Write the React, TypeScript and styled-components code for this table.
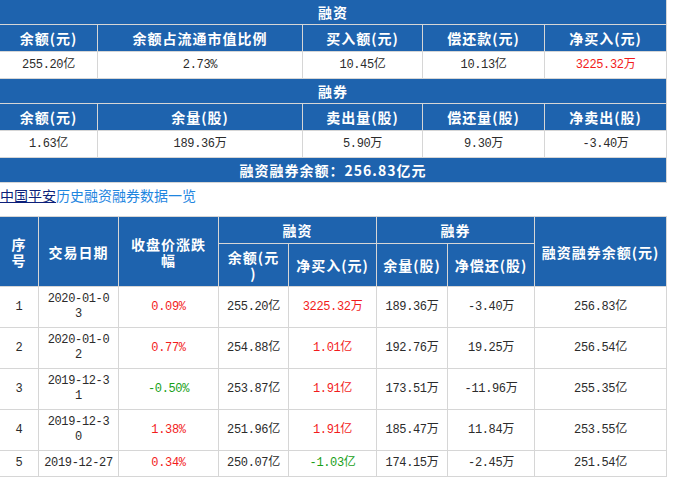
import React from 'react';
import styled, { createGlobalStyle } from 'styled-components';

type Tone = 'up' | 'down' | undefined;

interface Cell {
  text: string,
  tone?: Tone,
}

const GlobalStyle = createGlobalStyle`
  html, body {
    margin: 0;
    padding: 0;
    background: #fff;
  }
  body {
    font-family: "Noto Sans CJK SC", "Liberation Sans", sans-serif;
    width: 673px;
    overflow: hidden;
  }
`

const financing: Cell[] = [
  { text: '255.20亿' },
  { text: '2.73%' },
  { text: '10.45亿' },
  { text: '10.13亿' },
  { text: '3225.32万', tone: 'up' },
]

const lending: Cell[] = [
  { text: '1.63亿' },
  { text: '189.36万' },
  { text: '5.90万' },
  { text: '9.30万' },
  { text: '-3.40万' },
]

const history: Array<Cell[]> = [
  [{ text: '1' }, { text: '2020-01-0\n3' }, { text: '0.09%', tone: 'up' }, { text: '255.20亿' }, { text: '3225.32万', tone: 'up' }, { text: '189.36万' }, { text: '-3.40万' }, { text: '256.83亿' }],
  [{ text: '2' }, { text: '2020-01-0\n2' }, { text: '0.77%', tone: 'up' }, { text: '254.88亿' }, { text: '1.01亿', tone: 'up' }, { text: '192.76万' }, { text: '19.25万' }, { text: '256.54亿' }],
  [{ text: '3' }, { text: '2019-12-3\n1' }, { text: '-0.50%', tone: 'down' }, { text: '253.87亿' }, { text: '1.91亿', tone: 'up' }, { text: '173.51万' }, { text: '-11.96万' }, { text: '255.35亿' }],
  [{ text: '4' }, { text: '2019-12-3\n0' }, { text: '1.38%', tone: 'up' }, { text: '251.96亿' }, { text: '1.91亿', tone: 'up' }, { text: '185.47万' }, { text: '11.84万' }, { text: '253.55亿' }],
  [{ text: '5' }, { text: '2019-12-27' }, { text: '0.34%', tone: 'up' }, { text: '250.07亿' }, { text: '-1.03亿', tone: 'down' }, { text: '174.15万' }, { text: '-2.45万' }, { text: '251.54亿' }],
]

const App: React.FC = () => {
  return (
    <Page>
      <GlobalStyle />
      <SummaryTable>
        <colgroup>
          {[98, 205, 120, 122, 122].map((w, i) => <col key={i} style={{ width: w }} />)}
        </colgroup>
        <tbody>
          <BandRow><Band colSpan={5}>融资</Band></BandRow>
          <Row>
            <Head>余额(元)</Head>
            <Head>余额占流通市值比例</Head>
            <Head>买入额(元)</Head>
            <Head>偿还款(元)</Head>
            <Head>净买入(元)</Head>
          </Row>
          <Row>
            {financing.map((c, i) => <Data key={i} $tone={c.tone}>{c.text}</Data>)}
          </Row>
          <BandRow><Band colSpan={5}>融券</Band></BandRow>
          <Row>
            <Head>余额(元)</Head>
            <Head>余量(股)</Head>
            <Head>卖出量(股)</Head>
            <Head>偿还量(股)</Head>
            <Head>净卖出(股)</Head>
          </Row>
          <Row>
            {lending.map((c, i) => <Data key={i} $tone={c.tone}>{c.text}</Data>)}
          </Row>
          <BandRow><Band colSpan={5}>融资融券余额：256.83亿元</Band></BandRow>
        </tbody>
      </SummaryTable>

      <LinkLine>
        <StockLink href="#">中国平安</StockLink>
        <HistoryLink href="#">历史融资融券数据一览</HistoryLink>
      </LinkLine>

      <HistoryTable>
        <colgroup>
          {[39, 80, 100, 70, 88, 71, 87, 132].map((w, i) => <col key={i} style={{ width: w }} />)}
        </colgroup>
        <thead>
          <GroupRow>
            <GroupHead rowSpan={2}>{'序\n号'}</GroupHead>
            <GroupHead rowSpan={2}>交易日期</GroupHead>
            <GroupHead rowSpan={2}>{'收盘价涨跌\n幅'}</GroupHead>
            <GroupHead colSpan={2}>融资</GroupHead>
            <GroupHead colSpan={2}>融券</GroupHead>
            <GroupHead rowSpan={2}>融资融券余额(元)</GroupHead>
          </GroupRow>
          <SubRow>
            <GroupHead>{'余额(元\n)'}</GroupHead>
            <GroupHead>净买入(元)</GroupHead>
            <GroupHead>余量(股)</GroupHead>
            <GroupHead>净偿还(股)</GroupHead>
          </SubRow>
        </thead>
        <tbody>
          {history.map((row, r) => (
            <tr key={r}>
              {row.map((c, i) => <HistoryData key={i} $tone={c.tone}>{c.text}</HistoryData>)}
            </tr>
          ))}
        </tbody>
      </HistoryTable>
    </Page>
  )
}

export default App;

const toneColor = (tone: Tone) =>
  tone === 'up' ? '#f21c1c' : tone === 'down' ? '#18a018' : '#2b2b2b'

const Page = styled.div`
  margin: -1px 0 0 -1px;
  width: 674px;
`

const SummaryTable = styled.table`
  width: 668px;
  table-layout: fixed;
  border-collapse: collapse;
  border: 1px solid #d6d6d6;
`

const BandRow = styled.tr`
  height: 25px;
`

const Row = styled.tr`
  height: 27px;
`

const Band = styled.th`
  background: #1e63ae;
  color: #fff;
  font-size: 14px;
  font-weight: 700;
  letter-spacing: 1px;
  line-height: 16px;
  padding: 0;
  text-align: center;
  border: 1px solid #d6d6d6;
`

const Head = styled.th`
  background: #1e63ae;
  color: #fff;
  font-size: 14px;
  font-weight: 700;
  letter-spacing: 1px;
  line-height: 16px;
  padding: 0 4px;
  text-align: center;
  white-space: nowrap;
  border: 1px solid #d6d6d6;
`

const Data = styled.td<{ $tone: Tone }>`
  font-family: "Liberation Mono", "Noto Sans CJK SC", monospace;
  font-size: 12px;
  letter-spacing: -0.35px;
  line-height: 15px;
  color: ${p => toneColor(p.$tone)};
  text-align: center;
  padding: 0 4px;
  border: 1px solid #d6d6d6;
`

const LinkLine = styled.div`
  padding: 2px 0 0 1px;
  height: 20px;
  margin-bottom: 11px;
  font-size: 14px;
  line-height: 20px;
  white-space: nowrap;
`

const StockLink = styled.a`
  color: #0c1f7a;
  text-decoration: underline;
`

const HistoryLink = styled.a`
  color: #1f86df;
  text-decoration: none;
`

const HistoryTable = styled.table`
  width: 668px;
  table-layout: fixed;
  border-collapse: collapse;
  border: 1px solid #d6d6d6;
`

const GroupRow = styled.tr`
  height: 27px;
`

const SubRow = styled.tr`
  height: 43px;
`

const GroupHead = styled.th`
  background: #1e63ae;
  color: #fff;
  font-size: 14px;
  font-weight: 700;
  letter-spacing: 1px;
  line-height: 16px;
  padding: 0 4px;
  text-align: center;
  white-space: pre-line;
  border: 1px solid #d6d6d6;
`

const HistoryData = styled.td<{ $tone: Tone }>`
  font-family: "Liberation Mono", "Noto Sans CJK SC", monospace;
  font-size: 12px;
  letter-spacing: -0.35px;
  line-height: 15px;
  color: ${p => toneColor(p.$tone)};
  text-align: center;
  white-space: pre-line;
  padding: 5px 4px;
  border: 1px solid #d6d6d6;
`
